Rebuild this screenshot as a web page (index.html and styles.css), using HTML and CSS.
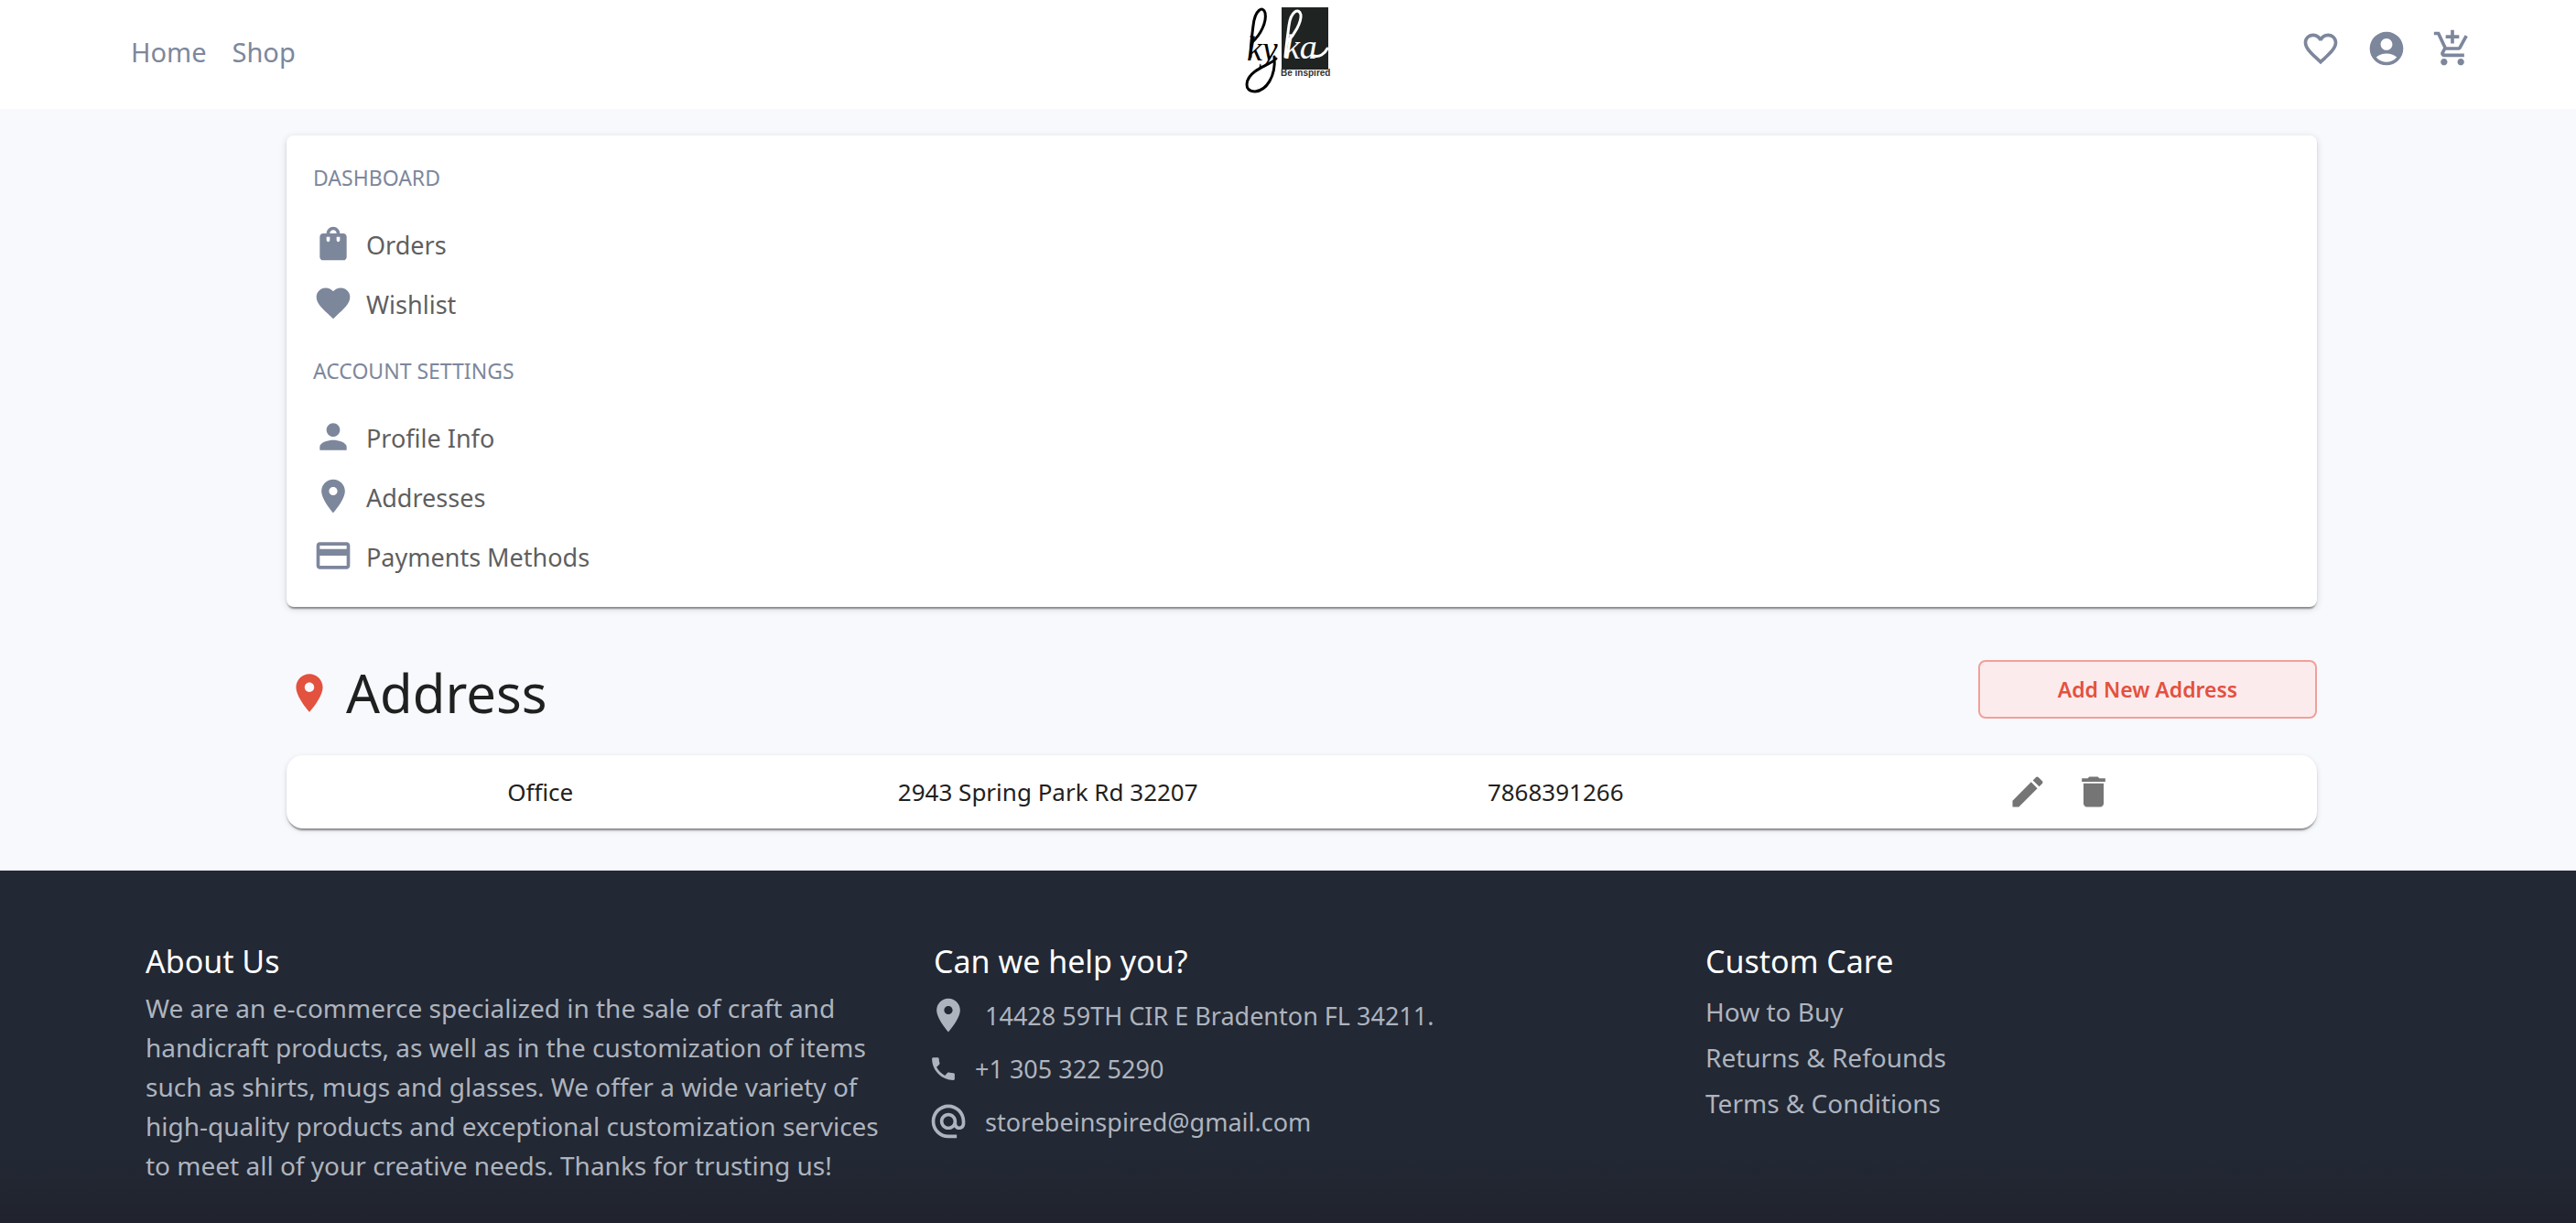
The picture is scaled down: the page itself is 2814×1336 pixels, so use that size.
FILE: index.html
```html
<!DOCTYPE html>
<html lang="en">
<head>
<meta charset="utf-8">
<meta name="viewport" content="width=device-width, initial-scale=1">
<title>Kyka – Addresses</title>
<link rel="stylesheet" href="styles.css">
</head>
<body>
<header class="topbar">
  <nav class="topbar-links" aria-label="Main">
    <a href="#home">Home</a>
    <a href="#shop">Shop</a>
  </nav>
  <a class="logo" href="#home" aria-label="Kyka, be inspired">
    <svg viewBox="0 0 100 105" width="100" height="105">
      <rect x="43" y="8" width="51" height="68" fill="#1f2321"/>
      <text class="logo-script" x="5" y="66">ky</text>
      <text class="logo-script logo-light" x="46" y="64">ka</text>
      <g fill="none" stroke-linecap="round">
        <path class="flourish" d="M11 46C20 38 27 24 25 14C23 6 14 10 12 28C11 36 9 50 9 62"/>
        <path class="flourish" d="M35 62C37 84 26 99 14 100C1 100 3 86 14 78C22 72 31 70 37 64"/>
        <path class="flourish flourish-light" d="M49 46C57 38 65 24 64 16C62 8 53 12 51 28C50 36 48 50 47 62"/>
        <path class="flourish flourish-light" d="M78 61C84 63 90 59 93 53"/>
      </g>
      <text class="logo-tag" x="42" y="83">Be inspired</text>
    </svg>
  </a>
  <nav class="topbar-actions" aria-label="Account">
    <a href="#wishlist" aria-label="Wishlist"><svg class="icon" viewBox="0 0 24 24"><path d="M16.5 3c-1.74 0-3.41.81-4.5 2.09C10.91 3.81 9.24 3 7.5 3 4.42 3 2 5.42 2 8.5c0 3.78 3.4 6.86 8.55 11.54L12 21.35l1.45-1.32C18.6 15.36 22 12.28 22 8.5 22 5.42 19.58 3 16.5 3zm-4.4 15.55-.1.1-.1-.1C7.14 14.24 4 11.39 4 8.5 4 6.5 5.5 5 7.5 5c1.54 0 3.04.99 3.57 2.36h1.87C13.46 5.99 14.96 5 16.5 5c2 0 3.5 1.5 3.5 3.5 0 2.89-3.14 5.74-7.9 10.05z"/></svg></a>
    <a href="#account" aria-label="Profile"><svg class="icon" viewBox="0 0 24 24"><path d="M12 2C6.48 2 2 6.48 2 12s4.48 10 10 10 10-4.48 10-10S17.52 2 12 2zm0 4c1.93 0 3.5 1.57 3.5 3.5S13.93 13 12 13s-3.5-1.57-3.5-3.5S10.07 6 12 6zm0 14c-2.03 0-4.43-.82-6.14-2.88C7.55 15.8 9.68 15 12 15s4.45.8 6.14 2.12C16.43 19.18 14.03 20 12 20z"/></svg></a>
    <a href="#cart" aria-label="Cart"><svg class="icon" viewBox="0 0 24 24"><path d="M11 9h2V6h3V4h-3V1h-2v3H8v2h3v3zm-4 9c-1.1 0-1.99.9-1.99 2S5.900 22 7 22s2-.9 2-2-.9-2-2-2zm10 0c-1.1 0-1.990.9-1.990 2s.89 2 1.990 2 2-.9 2-2-.9-2-2-2zm-9.830-3.250.03-.12.9-1.630h7.450c.75 0 1.410-.41 1.750-1.030l3.860-7.010L19.420 4h-.01l-1.100 2-2.760 5H8.530l-.13-.27L6.160 6l-.95-2-.94-2H1v2h2l3.600 7.590-1.350 2.450c-.16.28-.25.61-.25.960 0 1.100.9 2 2 2h12v-2H7.420c-.13 0-.25-.11-.25-.25z"/></svg></a>
  </nav>
</header>

<main class="content">
  <nav class="menu-card" aria-label="Account menu">
    <h2 class="menu-label">DASHBOARD</h2>
    <a class="menu-item" href="#orders"><svg class="icon" viewBox="0 0 24 24"><path d="M18 6h-2c0-2.210-1.790-4-4-4S8 3.790 8 6H6c-1.100 0-2 .9-2 2v12c0 1.100.9 2 2 2h12c1.100 0 2-.9 2-2V8c0-1.100-.9-2-2-2zm-8 4c0 .55-.45 1-1 1s-1-.45-1-1V8h2v2zm2-6c1.100 0 2 .9 2 2h-4c0-1.100.9-2 2-2zm4 6c0 .55-.45 1-1 1s-1-.45-1-1V8h2v2z"/></svg>Orders</a>
    <a class="menu-item" href="#wishlist"><svg class="icon" viewBox="0 0 24 24"><path d="m12 21.350-1.450-1.320C5.400 15.360 2 12.280 2 8.500 2 5.420 4.420 3 7.500 3c1.740 0 3.410.81 4.500 2.090C13.090 3.810 14.760 3 16.500 3 19.580 3 22 5.420 22 8.500c0 3.780-3.400 6.860-8.550 11.540L12 21.350z"/></svg>Wishlist</a>
    <h2 class="menu-label">ACCOUNT SETTINGS</h2>
    <a class="menu-item" href="#profile"><svg class="icon" viewBox="0 0 24 24"><path d="M12 12c2.210 0 4-1.790 4-4s-1.790-4-4-4-4 1.790-4 4 1.790 4 4 4zm0 2c-2.670 0-8 1.340-8 4v2h16v-2c0-2.660-5.330-4-8-4z"/></svg>Profile Info</a>
    <a class="menu-item" href="#addresses"><svg class="icon" viewBox="0 0 24 24"><path d="M12 2C8.130 2 5 5.130 5 9c0 5.250 7 13 7 13s7-7.750 7-13c0-3.870-3.130-7-7-7zm0 9.500c-1.380 0-2.500-1.120-2.500-2.500s1.120-2.500 2.500-2.500 2.500 1.120 2.500 2.500-1.120 2.500-2.500 2.500z"/></svg>Addresses</a>
    <a class="menu-item" href="#payments"><svg class="icon" viewBox="0 0 24 24"><path d="M20 4H4c-1.110 0-1.990.89-1.990 2L2 18c0 1.110.89 2 2 2h16c1.110 0 2-.89 2-2V6c0-1.110-.89-2-2-2zm0 14H4v-6h16v6zm0-10H4V6h16v2z"/></svg>Payments Methods</a>
  </nav>

  <div class="page-head">
    <h1 class="page-title"><svg class="icon" viewBox="0 0 24 24"><path d="M12 2C8.130 2 5 5.130 5 9c0 5.250 7 13 7 13s7-7.750 7-13c0-3.870-3.130-7-7-7zm0 9.500c-1.380 0-2.500-1.120-2.500-2.500s1.120-2.500 2.500-2.500 2.500 1.120 2.500 2.500-1.120 2.500-2.500 2.500z"/></svg>Address</h1>
    <button class="add-button" type="button">Add New Address</button>
  </div>

  <table class="address-table">
    <tbody>
      <tr>
        <td>Office</td>
        <td>2943 Spring Park Rd 32207</td>
        <td>7868391266</td>
        <td>
          <div class="row-actions">
            <button type="button" aria-label="Edit address"><svg class="icon" viewBox="0 0 24 24"><path d="M3 17.250V21h3.750L17.810 9.940l-3.750-3.750L3 17.250zM20.710 7.040c.39-.39.39-1.020 0-1.410l-2.340-2.340c-.39-.39-1.020-.39-1.410 0l-1.830 1.830 3.750 3.750 1.830-1.830z"/></svg></button>
            <button type="button" aria-label="Delete address"><svg class="icon" viewBox="0 0 24 24"><path d="M6 19c0 1.100.9 2 2 2h8c1.100 0 2-.9 2-2V7H6v12zM19 4h-3.500l-1-1h-5l-1 1H5v2h14V4z"/></svg></button>
          </div>
        </td>
      </tr>
    </tbody>
  </table>
</main>

<footer class="footer">
  <section>
    <h2 class="footer-title">About Us</h2>
    <p class="about">We are an e-commerce specialized in the sale of craft and<br>
      handicraft products, as well as in the customization of items<br>
      such as shirts, mugs and glasses. We offer a wide variety of<br>
      high-quality products and exceptional customization services<br>
      to meet all of your creative needs. Thanks for trusting us!</p>
  </section>
  <section>
    <h2 class="footer-title footer-title-inset">Can we help you?</h2>
    <ul class="contact">
      <li><svg class="icon" viewBox="0 0 24 24"><path d="M12 2C8.130 2 5 5.130 5 9c0 5.250 7 13 7 13s7-7.750 7-13c0-3.870-3.130-7-7-7zm0 9.500c-1.380 0-2.500-1.120-2.500-2.500s1.120-2.500 2.500-2.500 2.500 1.120 2.500 2.500-1.120 2.500-2.500 2.500z"/></svg>14428 59TH CIR E Bradenton FL 34211.</li>
      <li><svg class="icon icon-small" viewBox="0 0 24 24"><path d="M6.620 10.790c1.440 2.830 3.760 5.140 6.590 6.590l2.200-2.200c.27-.27.67-.36 1.020-.24 1.120.37 2.330.57 3.570.57.55 0 1 .45 1 1V20c0 .55-.45 1-1 1-9.390 0-17-7.610-17-17 0-.55.45-1 1-1h3.500c.55 0 1 .45 1 1 0 1.250.2 2.450.57 3.570.11.35.03.74-.25 1.020l-2.200 2.200z"/></svg>+1 305 322 5290</li>
      <li><svg class="icon" viewBox="0 0 24 24"><path d="M12 1.950c-5.520 0-10 4.480-10 10s4.480 10 10 10h5v-2h-5c-4.340 0-8-3.660-8-8s3.660-8 8-8 8 3.660 8 8v1.430c0 .79-.71 1.570-1.500 1.570s-1.500-.78-1.500-1.570v-1.430c0-2.760-2.240-5-5-5s-5 2.240-5 5 2.240 5 5 5c1.380 0 2.640-.56 3.540-1.470.65.89 1.770 1.470 2.960 1.470 1.970 0 3.500-1.600 3.500-3.570v-1.430c0-5.520-4.480-10-10-10zm0 13c-1.660 0-3-1.340-3-3s1.340-3 3-3 3 1.340 3 3-1.340 3-3 3z"/></svg>storebeinspired@gmail.com</li>
    </ul>
  </section>
  <section>
    <h2 class="footer-title">Custom Care</h2>
    <ul class="care">
      <li><a href="#how-to-buy">How to Buy</a></li>
      <li><a href="#returns">Returns &amp; Refounds</a></li>
      <li><a href="#terms">Terms &amp; Conditions</a></li>
    </ul>
  </section>
</footer>
</body>
</html>
```

FILE: styles.css
```css
:root {
  --slate: #7d879c;
  --ink: #1f2120;
  --red: #e3513f;
  --muted: #aeb4be;
}

* {
  box-sizing: border-box;
}

body {
  margin: 0;
  min-height: 100vh;
  display: flex;
  flex-direction: column;
  background: #f7f9fd;
  color: var(--ink);
  font-family: "Noto Sans", "Open Sans", sans-serif;
  font-size: 27px;
}

h1, h2, p, ul {
  margin: 0;
  padding: 0;
  font-weight: 400;
}

ul {
  list-style: none;
}

a {
  color: inherit;
  text-decoration: none;
}

button {
  font: inherit;
  color: inherit;
  cursor: pointer;
}

.icon {
  display: block;
  flex: none;
  width: 44px;
  height: 44px;
  fill: currentColor;
}

.icon-small {
  width: 33px;
  height: 33px;
}

/* Top bar */
.topbar {
  display: grid;
  grid-template-columns: 1fr auto 1fr;
  min-height: 119px;
  background: #fff;
  color: var(--slate);
}

.topbar-links {
  display: flex;
  align-items: center;
  gap: 28px;
  padding: 0 0 6px 143px;
  font-size: 29px;
}

.topbar-actions {
  display: flex;
  justify-content: flex-end;
  align-items: center;
  gap: 28px;
  padding: 0 113px 14px 0;
}

.logo svg {
  display: block;
}

.logo-script {
  font: italic 38px "Liberation Serif", serif;
  fill: #000;
}

.logo-light {
  fill: #fff;
}

.flourish {
  stroke: #000;
  stroke-width: 3;
}

.flourish-light {
  stroke: #fff;
}

.logo-tag {
  font: 700 10px "Liberation Sans", sans-serif;
  fill: #333;
}

/* Account area */
.content {
  padding: 29px 283px 46px 313px;
}

.menu-card {
  padding: 6px 29px 22px;
  border-radius: 8px;
  background: #fff;
  box-shadow: 0 4px 2px -2px rgba(0, 0, 0, .3), 0 2px 2px rgba(0, 0, 0, .14), 0 2px 8px rgba(0, 0, 0, .14);
}

.menu-label {
  color: var(--slate);
  font-size: 23px;
  line-height: 81px;
}

.menu-item {
  display: flex;
  align-items: center;
  gap: 14px;
  height: 65px;
  color: #5f5f5f;
}

.menu-item .icon {
  margin-bottom: 4px;
  color: var(--slate);
}

.page-head {
  display: flex;
  justify-content: space-between;
  align-items: flex-start;
  padding: 58px 0 32px;
}

.page-title {
  display: flex;
  align-items: center;
  gap: 15px;
  font-size: 58px;
  line-height: 72px;
}

.page-title .icon {
  width: 50px;
  height: 50px;
  color: var(--red);
}

.add-button {
  width: 370px;
  height: 64px;
  border: 2px solid #f0a09a;
  border-radius: 8px;
  background: #fcebec;
  color: var(--red);
  font-size: 23px;
  font-weight: 600;
}

.address-table {
  width: 100%;
  table-layout: fixed;
  border-spacing: 0;
  border-radius: 18px;
  background: #fff;
  box-shadow: 0 4px 2px -2px rgba(0, 0, 0, .3), 0 2px 2px rgba(0, 0, 0, .14), 0 2px 6px rgba(0, 0, 0, .12);
  font-size: 26px;
  text-align: center;
}

.address-table td {
  height: 80px;
  padding: 0;
}

.row-actions {
  display: flex;
  justify-content: center;
  gap: 28px;
  padding-right: 6px;
  color: #757575;
}

.row-actions button {
  padding: 0;
  border: 0;
  background: none;
}

/* Footer */
.footer {
  flex: 1;
  display: grid;
  grid-template-columns: 855fr 849fr 951fr;
  padding: 74px 0 26px 159px;
  background: linear-gradient(to top, #20232d, #222834 72px);
  color: var(--muted);
}

.footer-title {
  margin-bottom: 5px;
  color: #fff;
  font-size: 34px;
  line-height: 50px;
}

.footer-title-inset {
  padding-left: 6px;
}

.about {
  font-size: 28px;
  line-height: 43px;
  white-space: nowrap;
}

.contact li {
  display: flex;
  align-items: center;
  gap: 18px;
  height: 58px;
}

.care li {
  font-size: 28px;
  line-height: 50px;
}
```
